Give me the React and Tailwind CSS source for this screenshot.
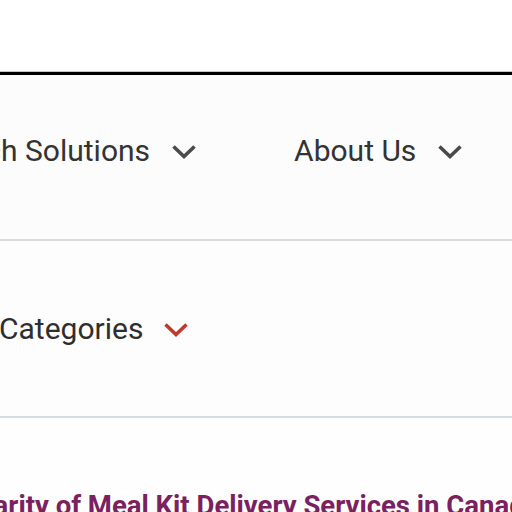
const Chevron = ({ className }) => (
  <svg width="26" height="16" viewBox="0 0 26 16" className={className} fill="none">
    <polyline points="2.5,2.5 13,12.5 23.5,2.5" stroke="currentColor" strokeWidth="3.6" strokeLinecap="butt" strokeLinejoin="miter" />
  </svg>
);

const NavItem = ({ label }) => (
  <div className="flex items-center gap-[21px]">
    <span className="text-[30px] leading-[36px] text-[#333333]">{label}</span>
    <Chevron className="text-[#4a4a4a] mt-[1px]" />
  </div>
);

export default function App() {
  return (
    <div className="w-[512px] h-[512px] overflow-hidden bg-white font-['Roboto',sans-serif]">
      <div className="h-[71px] bg-white" />
      <div className="h-px bg-[#c8c8c8]" />
      <div className="h-[3px] bg-black" />

      <nav className="h-[164px] bg-[#fcfcfc] pt-[58px] overflow-hidden">
        <div className="flex items-center gap-[97px] -ml-[47px] whitespace-nowrap">
          <NavItem label="Tech Solutions" />
          <NavItem label="About Us" />
        </div>
      </nav>
      <div className="h-[2px] bg-[#dadada]" />

      <div className="h-[175px] bg-[#fdfdfd] pt-[70px] overflow-hidden">
        <div className="flex items-center gap-[20px] -ml-[1px] whitespace-nowrap">
          <span className="text-[30px] leading-[36px] text-[#2e2e2e]">Categories</span>
          <Chevron className="text-[#c0392b] mt-[1px]" />
        </div>
      </div>
      <div className="h-[2px] bg-[#d6dce3]" />

      <div className="bg-[#fefefe] pt-[72px] overflow-hidden">
        <h1 className="-ml-[216px] whitespace-nowrap text-[27.5px] leading-[32px] font-bold text-[#7a2160]">
          The Rising Popularity of Meal Kit Delivery Services in Canada
        </h1>
      </div>
    </div>
  );
}
